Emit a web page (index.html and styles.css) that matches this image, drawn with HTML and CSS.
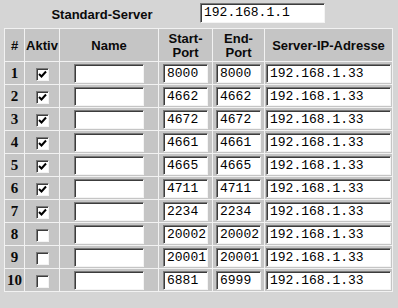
FILE: index.html
```html
<!DOCTYPE html>
<html lang="de">
<head>
    <meta charset="UTF-8">
    <title>Port-Weiterleitung</title>
    <link rel="stylesheet" href="styles.css">
</head>
<body>
    <div class="top">
        <div class="top-label">Standard-Server</div>
        <input class="field field-top" type="text" value="192.168.1.1">
    </div>

    <table class="ports">
        <colgroup>
            <col class="c-num">
            <col class="c-act">
            <col class="c-name">
            <col class="c-start">
            <col class="c-end">
            <col class="c-ip">
        </colgroup>
        <tr class="head">
            <th>#</th>
            <th>Aktiv</th>
            <th>Name</th>
            <th>Start-<br>Port</th>
            <th>End-<br>Port</th>
            <th>Server-IP-Adresse</th>
        </tr>
        <tbody id="rows"></tbody>
    </table>

    <script>
        const rules = [
            [true, '8000', '8000'],
            [true, '4662', '4662'],
            [true, '4672', '4672'],
            [true, '4661', '4661'],
            [true, '4665', '4665'],
            [true, '4711', '4711'],
            [true, '2234', '2234'],
            [false, '20002', '20002'],
            [false, '20001', '20001'],
            [false, '6881', '6999']
        ];

        const check = '<svg width="9" height="9" viewBox="0 0 9 9"><path d="M1 4 L3.5 6.5 L8 1.5" fill="none" stroke="#000" stroke-width="2"/></svg>';
        let html = '';

        rules.forEach(function (r, i) {
            html += '<tr>' +
                '<td class="num">' + (i + 1) + '</td>' +
                '<td><span class="box">' + (r[0] ? check : '') + '</span></td>' +
                '<td><input class="field field-name" type="text" value=""></td>' +
                '<td><input class="field field-port" type="text" value="' + r[1] + '"></td>' +
                '<td><input class="field field-port" type="text" value="' + r[2] + '"></td>' +
                '<td><input class="field field-ip" type="text" value="192.168.1.33"></td>' +
                '</tr>';
        });

        document.getElementById('rows').innerHTML = html;
    </script>
</body>
</html>
```

FILE: styles.css
```css
body {
    margin: 0 0 0 -3px;
    padding: 0 0 0 4px;
    background-color: #d5d5d5;
    border-left: 3px solid #dccfd2;
    font-family: "Liberation Sans", Arial, sans-serif;
    font-size: 13px;
    height: 308px;
    box-sizing: border-box;
}

.top {
    display: flex;
    align-items: center;
    height: 28px;
}

.top-label {
    width: 196px;
    text-align: center;
    font-weight: bold;
    color: #0a0a0a;
}

.field {
    box-sizing: border-box;
    margin: 0;
    padding: 0 0 0 3px;
    background: #fff;
    border: 1px solid;
    border-color: #7a7a7a #f4f4f4 #f4f4f4 #7a7a7a;
    box-shadow: inset 1px 1px #3c3c3c;
    font-family: "Liberation Mono", "Courier New", monospace;
    font-size: 13px;
    color: #000;
    outline: none;
    vertical-align: middle;
}

.field-top {
    width: 125px;
    height: 20px;
    margin-top: -3px;
}

.ports {
    table-layout: fixed;
    width: 389px;
    border-collapse: collapse;
    border: 1px solid #f2f2f2;
}

.c-num { width: 20px; }
.c-act { width: 35px; }
.c-name { width: 99px; }
.c-start { width: 54px; }
.c-end { width: 52px; }
.c-ip { width: 128px; }

.ports th,
.ports td {
    background-color: #c5c5c5;
    border: 1px solid #f2f2f2;
    padding: 0;
    text-align: center;
    vertical-align: middle;
}

.ports th {
    height: 33px;
    padding-top: 2px;
    box-sizing: border-box;
    font-weight: bold;
    line-height: 14px;
    color: #0a0a0a;
}

.ports td {
    height: 23px;
    box-sizing: border-box;
}

.num {
    font-family: "Liberation Serif", "Times New Roman", serif;
    font-weight: bold;
    font-size: 15px;
    color: #0a0a0a;
}

.box {
    display: inline-block;
    box-sizing: border-box;
    width: 13px;
    height: 13px;
    background: #fff;
    border: 1px solid;
    border-color: #7a7a7a #f4f4f4 #f4f4f4 #7a7a7a;
    box-shadow: inset 1px 1px #3c3c3c;
    vertical-align: middle;
    line-height: 0;
    padding: 1px 0 0 1px;
}

.field-name {
    width: 70px;
    height: 19px;
}

.field-port {
    width: 45px;
    height: 19px;
}

.field-ip {
    width: 125px;
    height: 19px;
}
```
